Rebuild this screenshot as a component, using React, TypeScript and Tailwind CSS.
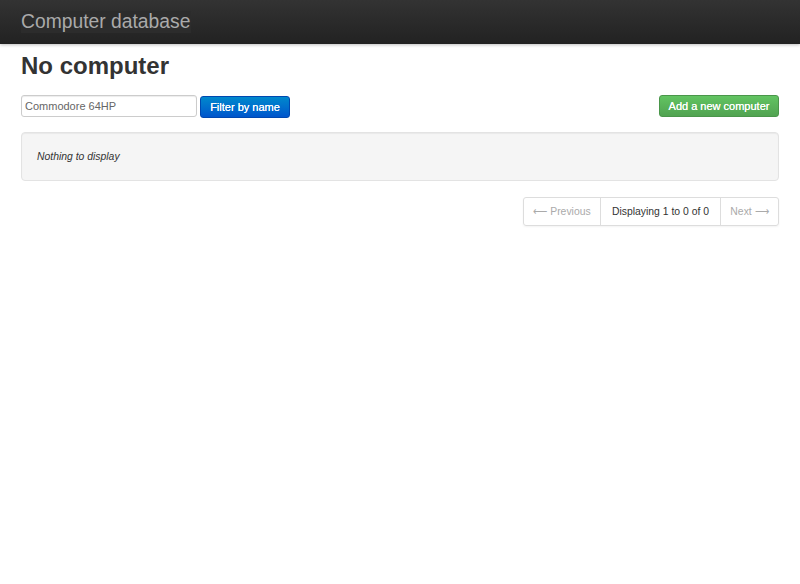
export default function App() {
  return (
    <div className="min-h-[584px] bg-white font-['Liberation_Sans',Arial,sans-serif] text-[#333]">
      <header className="h-[44px] bg-gradient-to-b from-[#333333] to-[#222222] shadow-[0_1px_3px_rgba(0,0,0,0.25)] flex items-center px-[21px]">
        <span className="text-[19.3px] leading-[22px] text-[#aaaaaa] bg-[#2c2c2c] pr-[1px]">Computer database</span>
      </header>

      <main className="px-[21px]">
        <h1 className="text-[24px] font-bold leading-[28px] mt-[8px] text-[#333]">No computer</h1>

        <div className="mt-[14px] flex items-center justify-between">
          <div className="flex items-center gap-[3px]">
            <input
              defaultValue="Commodore 64HP"
              className="w-[176px] h-[22px] border border-[#cccccc] rounded-[3px] px-[3px] text-[11px] text-[#666] shadow-[inset_0_1px_1px_rgba(0,0,0,0.075)] outline-none"
            />
            <button className="h-[22px] mt-[2px] w-[90px] rounded-[3px] text-[11px] font-medium text-white bg-gradient-to-b from-[#0088cc] to-[#0055cc] border border-[#0048b0] [text-shadow:0_0_0.4px_#fff]">
              Filter by name
            </button>
          </div>
          <button className="h-[22px] w-[120px] rounded-[3px] text-[11px] font-medium text-white bg-gradient-to-b from-[#62c462] to-[#51a351] border border-[#4a964a] [text-shadow:0_0_0.4px_#fff]">
            Add a new computer
          </button>
        </div>

        <div className="mt-[14px] h-[49px] bg-[#f5f5f5] border border-[#e3e3e3] rounded-[4px] shadow-[inset_0_1px_1px_rgba(0,0,0,0.05)] flex items-center px-[15px]">
          <em className="text-[10.4px] text-[#333]">Nothing to display</em>
        </div>

        <div className="mt-[16px] flex justify-end">
          <div className="flex h-[29px] border border-[#dddddd] rounded-[3px] shadow-[0_1px_2px_rgba(0,0,0,0.05)] text-[10.4px]">
            <span className="flex items-center text-[#aaa] border-r border-[#dddddd] w-[77px] justify-center">⟵ Previous</span>
            <span className="flex items-center text-[#333] border-r border-[#dddddd] w-[120px] justify-center">Displaying 1 to 0 of 0</span>
            <span className="flex items-center text-[#aaa] w-[57px] justify-center">Next ⟶</span>
          </div>
        </div>
      </main>
    </div>
  )
}
